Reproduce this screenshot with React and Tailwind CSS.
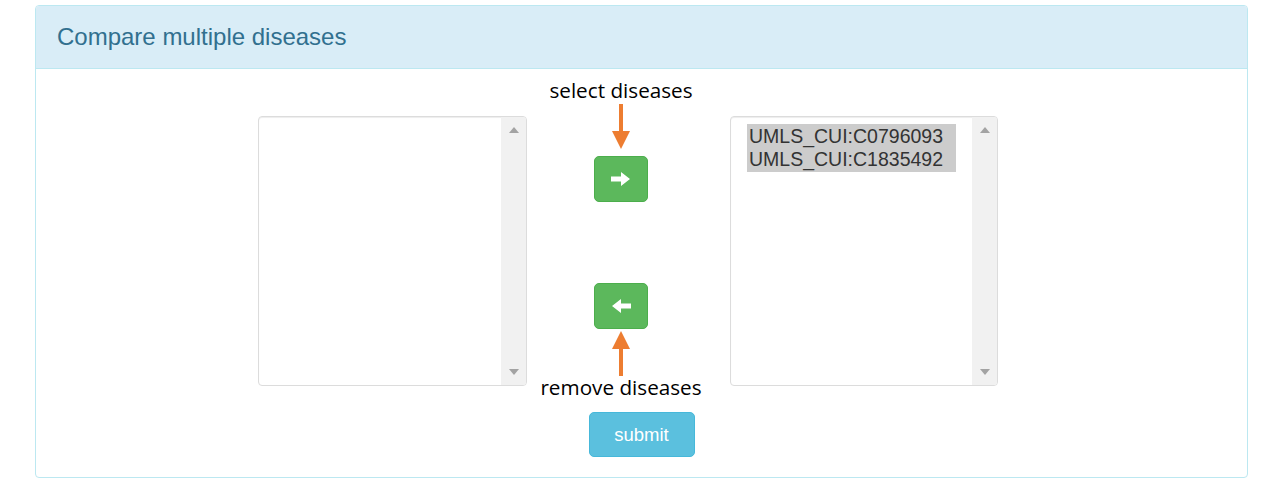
import React from "react";

function ScrollTrack() {
    return (
        <div className="w-[25px] bg-[#f1f1f1] flex flex-col justify-between items-center py-[10px]">
            <svg width="10" height="6" viewBox="0 0 10 6">
                <path d="M0 6 L5 0 L10 6 Z" fill="#a3a3a3" />
            </svg>
            <svg width="10" height="6" viewBox="0 0 10 6">
                <path d="M0 0 L5 6 L10 0 Z" fill="#a3a3a3" />
            </svg>
        </div>
    );
}

function ListBox({ items, className }) {
    return (
        <div className={"h-[270px] border border-[#dcdcdc] rounded-[4px] flex overflow-hidden bg-white shadow-[inset_0_1px_1px_rgba(0,0,0,0.075)] " + className}>
            <div className="flex-1 pl-[16px] pt-[7px]">
                {items.length > 0 && (
                    <div className="w-[209px] bg-[#cccccc] py-[1px]">
                        {items.map((it) => (
                            <div key={it} className="text-[19.5px] leading-[23px] text-[#333] pl-[2px] whitespace-nowrap" style={{ fontFamily: '"Liberation Sans", Arial, sans-serif' }}>
                                {it}
                            </div>
                        ))}
                    </div>
                )}
            </div>
            <ScrollTrack />
        </div>
    );
}

function OrangeArrow({ up }) {
    return (
        <svg width="20" height="46" viewBox="0 0 20 46" className={up ? "rotate-180" : ""}>
            <rect x="8" y="0" width="4" height="28" fill="#ed7d31" />
            <path d="M1 27 L19 27 L10 45 Z" fill="#ed7d31" />
        </svg>
    );
}

function GreenButton({ left }) {
    return (
        <button className="w-[54px] h-[46px] rounded-[5px] bg-[#5cb85c] border border-[#4cae4c] flex items-center justify-center">
            <svg width="20" height="14" viewBox="0 0 20 14" className={left ? "rotate-180" : ""}>
                <path d="M0 4.5 H10 V0 L19 7 L10 14 V9.5 H0 Z" fill="#ffffff" />
            </svg>
        </button>
    );
}

export default function App() {
    const labelFont = { fontFamily: '"Open Sans", "Noto Sans", sans-serif' };
    return (
        <div className="w-[1282px] h-[488px] bg-white pt-[5px] pl-[35px]">
            <div className="w-[1213px] border border-[#bce8f1] rounded-[4px] overflow-hidden">
                <div className="h-[63px] bg-[#d9edf7] border-b border-[#bce8f1] flex items-center pl-[21px]">
                    <h3 className="text-[24px] text-[#31708f]" style={{ fontFamily: '"Liberation Sans", Arial, sans-serif' }}>
                        Compare multiple diseases
                    </h3>
                </div>
                <div className="pt-[10px] pb-[20px]">
                    <div className="flex items-start pl-[222px]">
                        <ListBox items={[]} className="w-[269px] mt-[37px]" />
                        <div className="w-[203px] flex flex-col items-center pr-[15px]">
                            <div className="h-[22px] leading-[22px] text-[20.7px] text-black whitespace-nowrap" style={labelFont}>
                                select diseases
                            </div>
                            <div className="mt-[3px] flex">
                                <OrangeArrow />
                            </div>
                            <div className="mt-[6px]">
                                <GreenButton />
                            </div>
                            <div className="mt-[81px]">
                                <GreenButton left />
                            </div>
                            <div className="mt-[1px] flex">
                                <OrangeArrow up />
                            </div>
                            <div className="h-[22px] leading-[22px] text-[20.7px] text-black whitespace-nowrap" style={labelFont}>
                                remove diseases
                            </div>
                        </div>
                        <ListBox items={["UMLS_CUI:C0796093", "UMLS_CUI:C1835492"]} className="w-[268px] mt-[37px]" />
                    </div>
                    <div className="flex justify-center mt-[14px]">
                        <button className="w-[106px] h-[45px] rounded-[5px] bg-[#5bc0de] border border-[#46b8da] text-white text-[18.5px]" style={{ fontFamily: '"Liberation Sans", Arial, sans-serif' }}>
                            submit
                        </button>
                    </div>
                </div>
            </div>
        </div>
    );
}
